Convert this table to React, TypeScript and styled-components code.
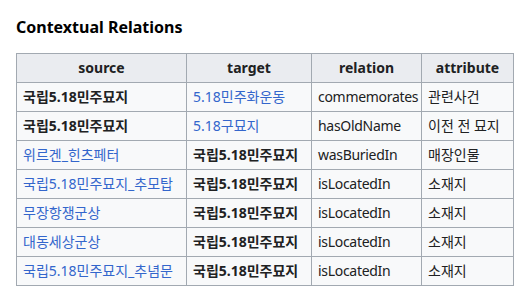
import React, { FC } from 'react';
import styled, { createGlobalStyle } from 'styled-components';

const GlobalStyle = createGlobalStyle`
    body {
        margin: 0;
        background: #ffffff;
        color: #202122;
        font-family: 'Noto Sans', 'Noto Sans CJK KR', sans-serif;
    }
`;

const Page = styled.div`
    padding: 15px 16px 0 16px;
`;

const Title = styled.h3`
    margin: 0 0 14px 0;
    font-size: 16px;
    line-height: 24px;
    font-weight: bold;
    color: #000000;
`;

const Table = styled.table`
    border-collapse: collapse;
    background: #f8f9fa;
    border: 1px solid #a2a9b1;
    font-size: 14px;
    width: 497px;
    table-layout: fixed;
`;

const Head = styled.th<{ $w: number }>`
    box-sizing: border-box;
    width: ${(p) => p.$w}px;
    background: #eaecf0;
    border: 1px solid #a2a9b1;
    padding: 3px 6px;
    height: 22px;
    text-align: center;
    font-weight: bold;
    line-height: 22px;
`;

const Cell = styled.td<{ $bold?: boolean }>`
    border: 1px solid #a2a9b1;
    padding: 3px 6px;
    height: 22px;
    line-height: 22px;
    white-space: nowrap;
    overflow: hidden;
    font-weight: ${(p) => (p.$bold ? 'bold' : 'normal')};
`;

// Latin property names run a little wider than in the original font
const RelationCell = styled(Cell)`
    letter-spacing: -0.3px;
`;

const WikiLink = styled.a`
    color: #3366cc;
    text-decoration: none;
`;

interface Node {
    text: string;
    link?: boolean;
}

interface Relation {
    source: Node;
    target: Node;
    relation: string;
    attribute: string;
}

const home = '국립5.18민주묘지';

const rows: Relation[] = [
    { source: { text: home }, target: { text: '5.18민주화운동', link: true }, relation: 'commemorates', attribute: '관련사건' },
    { source: { text: home }, target: { text: '5.18구묘지', link: true }, relation: 'hasOldName', attribute: '이전 전 묘지' },
    { source: { text: '위르겐_힌츠페터', link: true }, target: { text: home }, relation: 'wasBuriedIn', attribute: '매장인물' },
    { source: { text: '국립5.18민주묘지_추모탑', link: true }, target: { text: home }, relation: 'isLocatedIn', attribute: '소재지' },
    { source: { text: '무장항쟁군상', link: true }, target: { text: home }, relation: 'isLocatedIn', attribute: '소재지' },
    { source: { text: '대동세상군상', link: true }, target: { text: home }, relation: 'isLocatedIn', attribute: '소재지' },
    { source: { text: '국립5.18민주묘지_추념문', link: true }, target: { text: home }, relation: 'isLocatedIn', attribute: '소재지' },
];

const NodeCell: FC<{ node: Node }> = ({ node }) =>
    node.link ? (
        <Cell>
            <WikiLink href="#">{node.text}</WikiLink>
        </Cell>
    ) : (
        <Cell $bold>{node.text}</Cell>
    );

export default function App() {
    return (
        <Page>
            <GlobalStyle />
            <Title>Contextual Relations</Title>
            <Table>
                <thead>
                    <tr>
                        <Head $w={170}>source</Head>
                        <Head $w={125}>target</Head>
                        <Head $w={110}>relation</Head>
                        <Head $w={92}>attribute</Head>
                    </tr>
                </thead>
                <tbody>
                    {rows.map((r, i) => (
                        <tr key={i}>
                            <NodeCell node={r.source} />
                            <NodeCell node={r.target} />
                            <RelationCell>{r.relation}</RelationCell>
                            <Cell>{r.attribute}</Cell>
                        </tr>
                    ))}
                </tbody>
            </Table>
        </Page>
    );
}
